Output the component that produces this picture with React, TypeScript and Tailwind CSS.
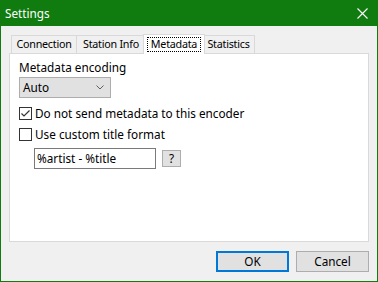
import React from 'react'

const FONT = "font-['Noto_Sans',_'Open_Sans',_sans-serif]"

const TABS = [
  { label: 'Connection', width: 'w-[66px]' },
  { label: 'Station Info', width: 'w-[70px]' },
  { label: 'Metadata', width: 'w-[62px]', selected: true },
  { label: 'Statistics', width: 'w-[53px]' },
]

function Tab({ label, width, selected }: { label: string; width: string; selected?: boolean }) {
  if (selected) {
    return (
      <div className={`relative z-10 -ml-[3px] -mr-[2px] -mb-px flex h-[20px] items-center justify-center border border-b-0 border-[#d9d9d9] bg-white ${width}`}>
        <span className="border border-dotted border-black px-[3px] leading-[13px]">{label}</span>
      </div>
    )
  }
  return (
    <div className={`-ml-px flex h-[18px] items-center justify-center border border-b-0 border-[#d9d9d9] bg-[#f0f0f0] first:ml-0 ${width}`}>
      {label}
    </div>
  )
}

function CheckBox({ checked }: { checked?: boolean }) {
  return (
    <span className="flex size-[13px] shrink-0 items-center justify-center border border-[#333333] bg-white">
      {checked && (
        <svg width="11" height="11" viewBox="0 0 11 11" aria-hidden>
          <path d="M1.5 5.5 L4 8 L9.5 2.5" fill="none" stroke="#333333" strokeWidth="1.2" />
        </svg>
      )}
    </span>
  )
}

export default function App() {
  return (
    <div className={`${FONT} flex h-[282px] w-[378px] flex-col border border-[#107c10] bg-[#f0f0f0] text-[11.75px] text-black`}>
      {/* title bar */}
      <div className="flex h-[25px] shrink-0 items-center justify-between bg-[#107c10] pl-[4px] pr-[9px] text-white">
        <span className="text-[11.75px]">Settings</span>
        <svg width="11" height="11" viewBox="0 0 11 11" aria-hidden>
          <path d="M0.5 0.5 L10.5 10.5 M10.5 0.5 L0.5 10.5" stroke="white" strokeWidth="1.1" />
        </svg>
      </div>

      <div className="flex flex-1 flex-col px-[8px] pt-[9px]">
        {/* tab strip */}
        <div className="flex h-[18px] items-end pl-[2px] text-[10.75px] tracking-[-0.25px]">
          {TABS.map((tab) => (
            <Tab key={tab.label} {...tab} />
          ))}
        </div>

        {/* tab page */}
        <div className="flex h-[189px] flex-col border border-[#d9d9d9] bg-white pl-[9px] pt-[5px]">
          <div className="leading-[16px]">Metadata encoding</div>
          <div className="mt-[2px] flex h-[21px] w-[92px] items-center justify-between border border-[#adadad] bg-[#e1e1e1] pl-[3px] pr-[6px]">
            <span>Auto</span>
            <svg width="8" height="5" viewBox="0 0 8 5" aria-hidden>
              <path d="M0.5 0.5 L4 4 L7.5 0.5" fill="none" stroke="#606060" strokeWidth="1" />
            </svg>
          </div>
          <label className="mt-[9px] flex h-[13px] items-center gap-[3px]">
            <CheckBox checked />
            <span className="leading-[13px]">Do not send metadata to this encoder</span>
          </label>
          <label className="mt-[8px] flex h-[13px] items-center gap-[3px]">
            <CheckBox />
            <span className="leading-[13px]">Use custom title format</span>
          </label>
          <div className="mt-[7px] flex items-center gap-[6px] pl-[15px]">
            <div className="flex h-[21px] w-[122px] items-center border border-[#7a7a7a] bg-white pl-[2px]">
              %artist - %title
            </div>
            <div className="flex h-[17px] w-[19px] items-center justify-center border border-[#adadad] bg-[#e1e1e1]">
              ?
            </div>
          </div>
        </div>

        {/* buttons */}
        <div className="mt-[9px] flex justify-end gap-[7px]">
          <button type="button" className="flex h-[21px] w-[73px] items-center justify-center border-2 border-[#0078d7] bg-[#e1e1e1]">
            OK
          </button>
          <button type="button" className="flex h-[21px] w-[73px] items-center justify-center border border-[#adadad] bg-[#e1e1e1]">
            Cancel
          </button>
        </div>
      </div>
    </div>
  )
}
